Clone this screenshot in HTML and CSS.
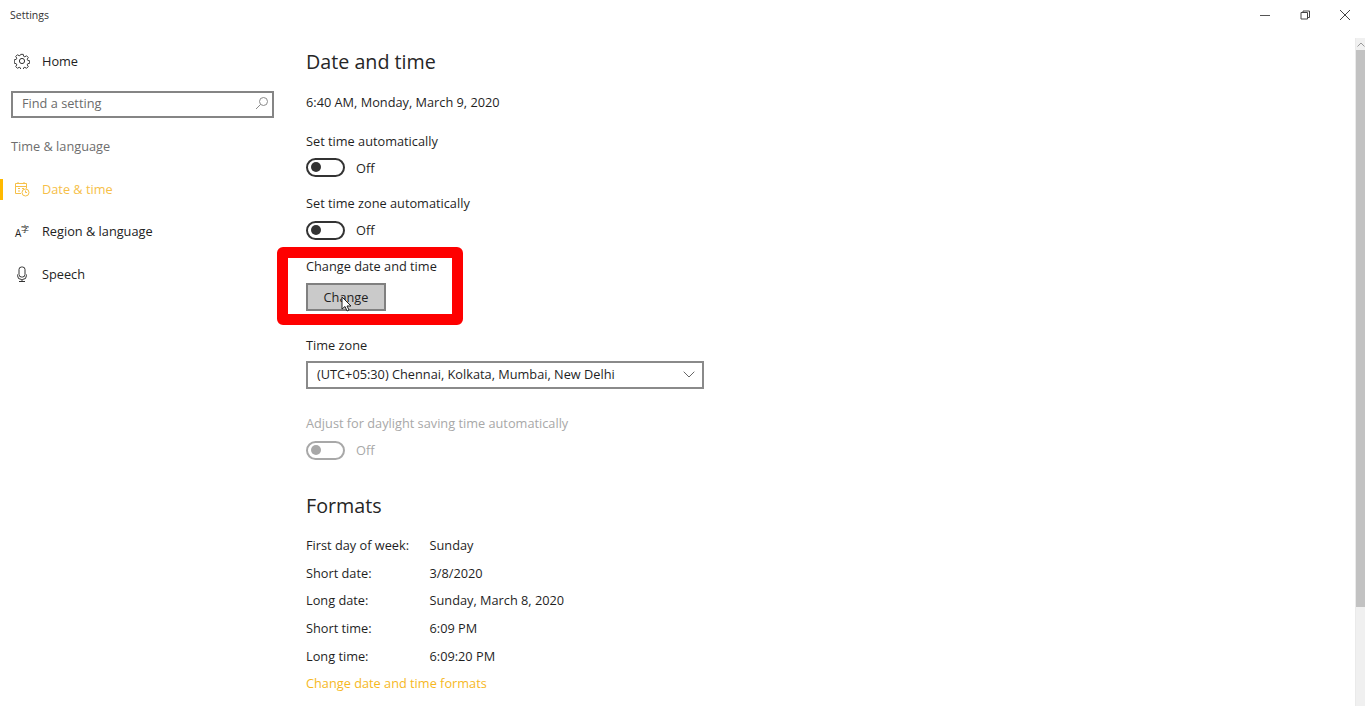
FILE: index.html
```html
<!DOCTYPE html>
<html lang="en">
<head>
<meta charset="utf-8">
<title>Settings</title>
<link rel="stylesheet" href="styles.css">
</head>
<body>
<div class="window">
  <header class="titlebar">
    <span class="app-title">Settings</span>
    <div class="controls">
      <svg class="ctl" width="12" height="12" viewBox="0 0 12 12"><path d="M1 6.500h10" stroke="#555" fill="none"/></svg>
      <svg class="ctl" width="12" height="12" viewBox="0 0 12 12"><path d="M2 3.500h6.500v6.500H2zM4 3.500V2h6.500v6.500H8.500" stroke="#444" fill="none"/></svg>
      <svg class="ctl" width="12" height="12" viewBox="0 0 12 12"><path d="M1 1l10 10M11 1L1 11" stroke="#444" fill="none"/></svg>
    </div>
  </header>
  <div class="body">
    <nav class="sidebar">
      <a class="nav-item home">
        <svg class="nav-icon" width="16" height="16" viewBox="0 0 16 16" fill="none" stroke="#333" stroke-width="1"><circle cx="8" cy="8" r="2.600"/><path d="M6.700 1h2.600l.4 2 1.300.6 1.800-1.100 1.800 1.800-1.100 1.800.6 1.300 2 .4v2.600l-2 .4-.6 1.300 1.100 1.800-1.800 1.800-1.800-1.100-1.300.6-.4 2H6.700l-.4-2-1.300-.6-1.800 1.100-1.800-1.800 1.100-1.800-.6-1.300-2-.4V6.700l2-.4.6-1.300L1.400 3.200l1.800-1.800L5 2.500l1.300-.6z" transform="translate(.4 .4) scale(.95)"/></svg>
        <span>Home</span>
      </a>
      <div class="search">
        <span class="search-text">Find a setting</span>
        <svg width="14" height="14" viewBox="0 0 14 14" fill="none" stroke="#8a8a8a"><circle cx="8.500" cy="5.500" r="4"/><path d="M5.500 8.500L1 13"/></svg>
      </div>
      <div class="section-name">Time &amp; language</div>
      <a class="nav-item active">
        <svg class="nav-icon" width="16" height="16" viewBox="0 0 16 16" fill="none" stroke="#f6c048" stroke-width="1"><path d="M7 12.500H1.500V2.500h11v5M1.500 5.500h11M4 1v2M10 1v2M4 7.500h2M8 7.500h2M4 10h2"/><circle cx="11.500" cy="11.500" r="3.500"/><path d="M11.500 9.500v2h1.500"/></svg>
        <span>Date &amp; time</span>
      </a>
      <a class="nav-item">
        <svg class="nav-icon icon-lang" width="16" height="16" viewBox="0 0 16 16"><text x="1" y="14" class="glyph-a">A</text><text x="7" y="9" class="glyph-zi">字</text></svg>
        <span>Region &amp; language</span>
      </a>
      <a class="nav-item">
        <svg class="nav-icon" width="16" height="16" viewBox="0 0 16 16" fill="none" stroke="#333" stroke-width="1"><rect x="5" y="1" width="6" height="10" rx="2.500"/><path d="M3.500 8.500v1a4 4 0 0 0 4 4h1a4 4 0 0 0 4-4v-1M8 13.500v2M5 15.500h6"/></svg>
        <span>Speech</span>
      </a>
    </nav>
    <main class="content">
      <h1 class="heading first">Date and time</h1>
      <p class="now">6:40 AM, Monday, March 9, 2020</p>
      <div class="label l-auto">Set time automatically</div>
      <div class="toggle-row tr-auto"><span class="toggle"><i></i></span><span>Off</span></div>
      <div class="label l-zone">Set time zone automatically</div>
      <div class="toggle-row tr-zone"><span class="toggle"><i></i></span><span>Off</span></div>
      <section class="highlighted">
        <div class="label">Change date and time</div>
        <button class="change-btn" type="button">Change</button>
        <span class="red-box"></span>
        <svg class="cursor" width="12" height="17" viewBox="0 0 12 17"><path d="M1 1v12l3-2.500 2 4.500 2-1-2-4h4z" fill="#fff" stroke="#222" stroke-width="1"/></svg>
      </section>
      <div class="label l-tz">Time zone</div>
      <div class="select"><span>(UTC+05:30) Chennai, Kolkata, Mumbai, New Delhi</span>
        <svg width="12" height="7" viewBox="0 0 12 7" fill="none" stroke="#666"><path d="M.7.700L6 6l5.300-5.300"/></svg>
      </div>
      <div class="label l-dst disabled">Adjust for daylight saving time automatically</div>
      <div class="toggle-row tr-dst disabled"><span class="toggle"><i></i></span><span>Off</span></div>
      <h2 class="heading formats">Formats</h2>
      <dl class="formats-list">
        <div class="fmt"><dt>First day of week:</dt><dd>Sunday</dd></div>
        <div class="fmt"><dt>Short date:</dt><dd>3/8/2020</dd></div>
        <div class="fmt"><dt>Long date:</dt><dd>Sunday, March 8, 2020</dd></div>
        <div class="fmt"><dt>Short time:</dt><dd>6:09 PM</dd></div>
        <div class="fmt"><dt>Long time:</dt><dd>6:09:20 PM</dd></div>
      </dl>
      <a class="link">Change date and time formats</a>
    </main>
    <div class="scrollbar">
      <div class="arrow"><svg width="8" height="5" viewBox="0 0 8 5" fill="none" stroke="#9a9a9a"><path d="M.5 4.500L4 1l3.500 3.500"/></svg></div>
      <div class="thumb"></div>
    </div>
  </div>
</div>
</body>
</html>
```
FILE: styles.css
```css
* { box-sizing: border-box; }
html, body { margin: 0; height: 100%; overflow: hidden; background: #fff; }
body { font-family: "Open Sans", "Noto Sans", sans-serif; font-size: 12.75px; color: #1f1f1f; }
.window { height: 706px; display: flex; flex-direction: column; }

.titlebar { height: 30px; flex: none; display: flex; align-items: center; justify-content: space-between; padding-left: 10px; }
.app-title { font-size: 10.5px; color: #333; }
.controls { display: flex; gap: 28px; padding-right: 14px; }
.ctl { display: block; }

.body { flex: 1; display: flex; min-height: 0; }
.sidebar { width: 306px; flex: none; display: flex; flex-direction: column; }
.nav-item { height: 42.500px; display: flex; align-items: center; gap: 12px; padding-left: 14px; position: relative; color: #222; }
.nav-icon { display: block; flex: none; }
.icon-lang { overflow: visible; }
.home { margin-top: 10px; }
.search { margin: 8px 0 0 11px; width: 263px; height: 27px; border: 2px solid #858585; display: flex; align-items: center; justify-content: space-between; padding: 0 3px 2px 9px; }
.search-text { color: #6b6b6b; }
.section-name { margin: 18px 0 0 11px; line-height: 20px; color: #6e6e6e; }
.section-name + .nav-item { margin-top: 12px; }
.active { color: #f6c048; }
.active::before { content: ""; position: absolute; left: 0; top: 11px; width: 3px; height: 21px; background: #ffb900; }
.glyph-a { font: 10px "Open Sans", sans-serif; fill: #222; }
.glyph-zi { font: 8px "Noto Sans CJK SC", sans-serif; fill: #222; }

.content { flex: 1; min-width: 0; }
.heading { margin: 0; font-weight: 400; font-size: 19.700px; line-height: 32px; color: #262626; }
.first { margin-top: 16px; }
.now { margin: 14px 0 0; line-height: 20px; }
.label { line-height: 20px; }
.l-auto { margin-top: 19px; }
.l-zone { margin-top: 16px; }
.toggle-row { height: 20px; margin-top: 6px; display: flex; align-items: center; gap: 11px; }
.tr-auto span:last-child { padding-top: 2px; }
.tr-zone { margin-top: 7px; }
.toggle { width: 39px; height: 19px; border: 2px solid #333; border-radius: 10px; display: flex; align-items: center; padding-left: 3px; }
.toggle i { width: 10px; height: 10px; border-radius: 50%; background: #333; }

.highlighted { position: relative; margin-top: 16px; }
.change-btn { display: block; width: 80px; height: 28px; margin-top: 7px; padding: 0 0 1px; background: #cacaca; border: 2px solid #808080; font: inherit; color: #1f1f1f; }
.red-box { position: absolute; left: -29px; top: -9px; width: 186px; height: 78px; border: 11px solid #fe0000; border-radius: 6px; }
.cursor { position: absolute; left: 35px; top: 40px; }

.l-tz { margin-top: 24px; }
.select { margin-top: 6px; width: 398px; height: 28px; border: 2px solid #8a8a8a; display: flex; align-items: center; justify-content: space-between; padding: 0 7px 2px 9px; }
.l-dst { margin-top: 24px; }
.tr-dst { margin-top: 7px; }
.disabled { color: #a8a8a8; }
.disabled .toggle { border-color: #a8a8a8; }
.disabled .toggle i { background: #a8a8a8; }
.formats { margin-top: 30px; }
.formats-list { margin: 9px 0 0; }
.fmt { height: 27.750px; display: flex; align-items: center; }
.fmt dt { width: 123.500px; }
.fmt dd { margin: 0; }
.link { display: flex; align-items: center; height: 26px; color: #f6b81e; }

.scrollbar { width: 10px; flex: none; background: #f0f0f0; margin-top: 8px; border-left: 1px solid #eaeaea; }
.arrow { height: 12px; display: flex; align-items: center; justify-content: center; }
.thumb { height: 557px; background: #c2c2c2; }
```
